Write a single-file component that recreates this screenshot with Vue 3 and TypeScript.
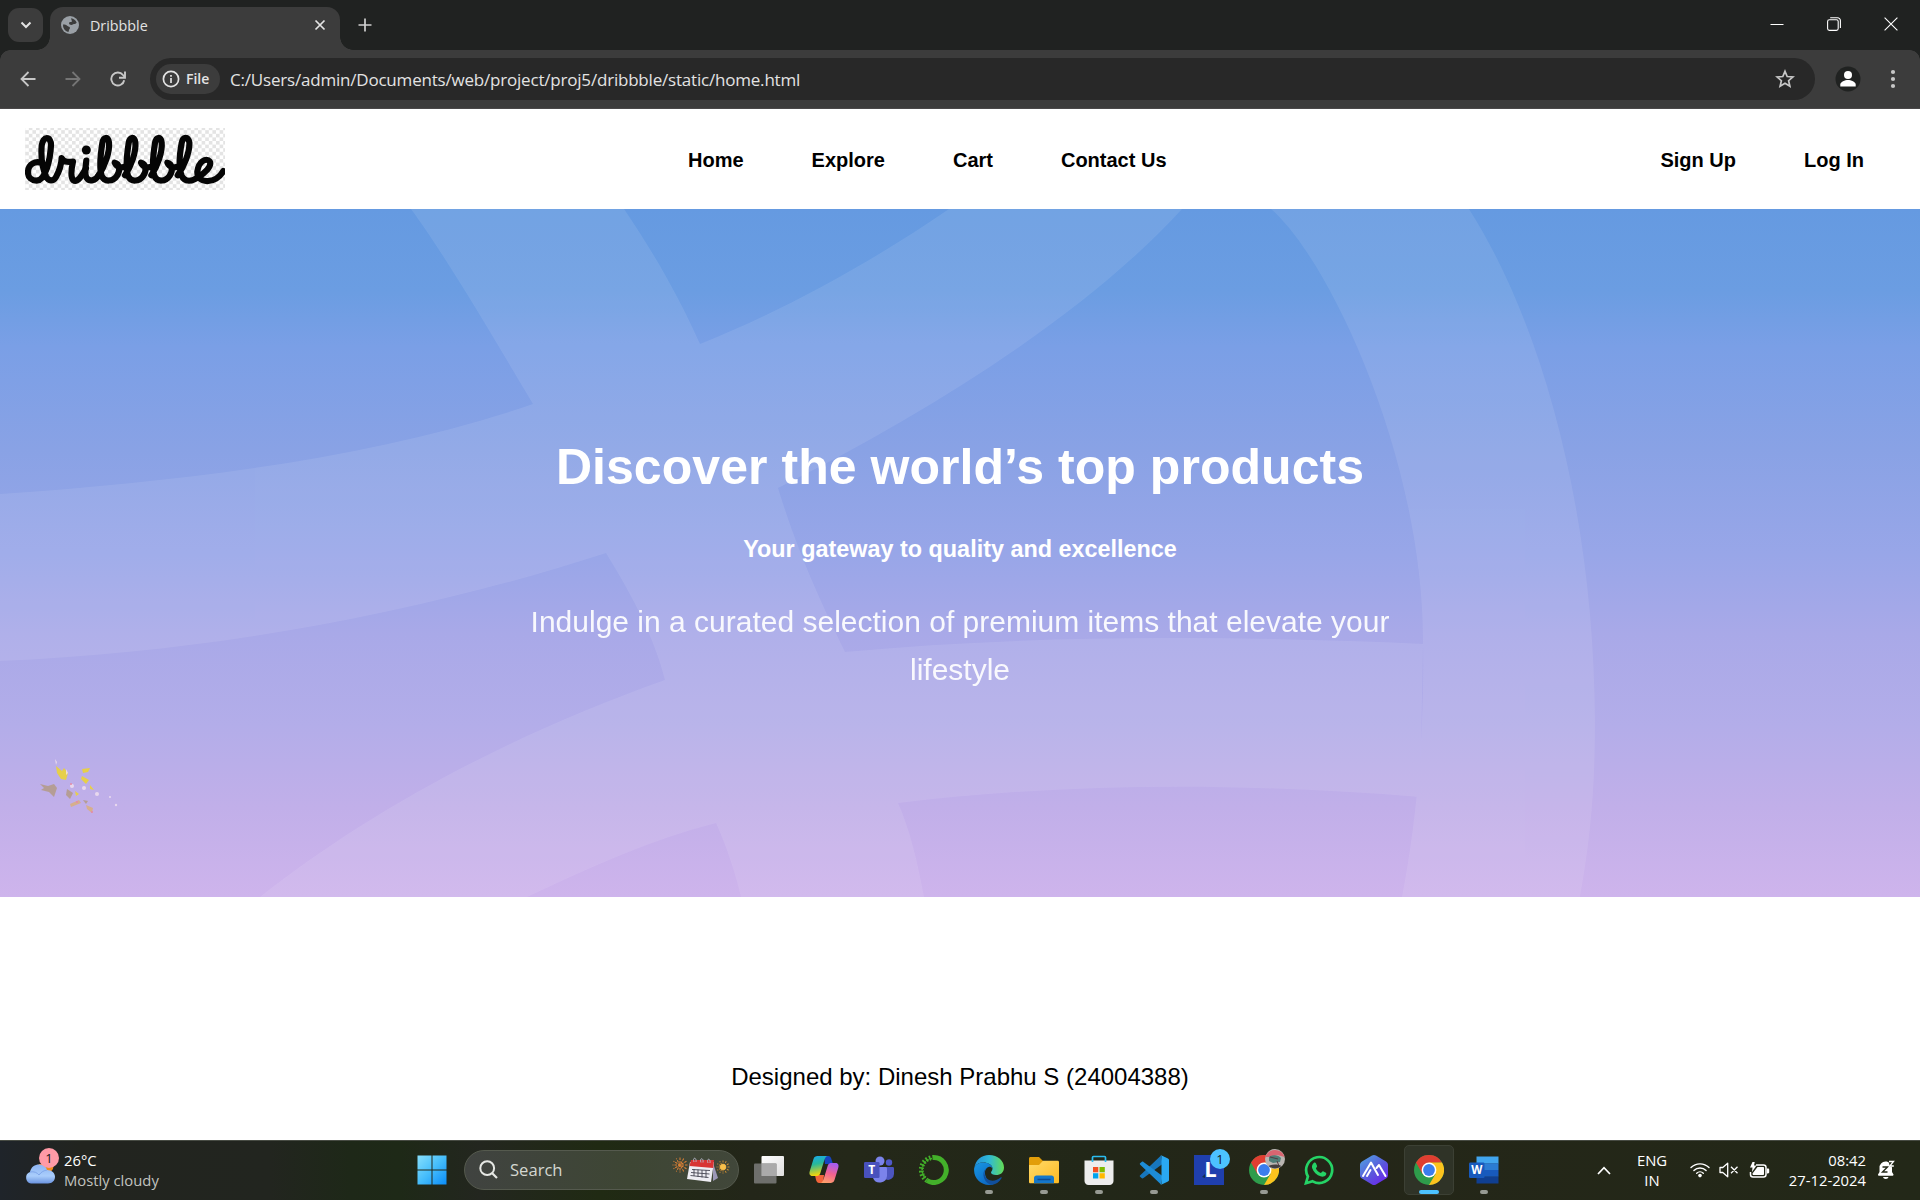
<script setup lang="ts">
interface NavLink {
  label: string
}

const mainLinks: NavLink[] = [
  { label: 'Home' },
  { label: 'Explore' },
  { label: 'Cart' },
  { label: 'Contact Us' },
]
const authLinks: NavLink[] = [{ label: 'Sign Up' }, { label: 'Log In' }]

// Horizontal offsets of the three repeated looped strokes in the logo
const loopOffsets: number[] = [0, 79, 158]

const spokes: number[] = [0, 30, 60, 90, 120, 150]
</script>

<template>
  <div class="screen">
    <div class="tabstrip">
      <div class="tab-search">
        <svg width="12" height="8" viewBox="0 0 12 8"><path d="M1.5 1.5 6 6l4.500-4.500" fill="none" stroke="#e3e3e3" stroke-width="2" /></svg>
      </div>
      <div class="tab">
        <svg class="globe" width="18" height="18" viewBox="0 0 18 18">
          <circle cx="9" cy="9" r="9" fill="#9aa0a6" />
          <path d="M10 2.200a7 7 0 0 1 5.700 4.600c-1 .9-1.300 1.200-2.700 1.200-1.200 0-1.300 1-2.500 1-1.600 0-2.500-1-2.500-2 0-.9 1-1 2-1 1 0 1-1 .6-1.800zM2 8.500c2 0 3.200.3 4.500 1.500.9.900 2.500.4 2.500 2 0 1-.8 1.200-1 2-.2.900-.3 1.700-.8 2A7 7 0 0 1 2 8.500z" fill="#3c3c3c" />
        </svg>
        <span class="tab-title">Dribbble</span>
        <svg class="tab-close" width="12" height="12" viewBox="0 0 12 12"><path d="M1.500 1.500l9 9m0-9l-9 9" stroke="#e3e3e3" stroke-width="1.700" /></svg>
      </div>
      <svg class="tab-new" width="14" height="14" viewBox="0 0 14 14"><path d="M7 .5v13M.5 7h13" stroke="#d0d0d0" stroke-width="1.700" /></svg>
      <div class="window-controls">
        <svg width="14" height="14" viewBox="0 0 14 14"><path d="M.5 7.500h13" stroke="#fff" /></svg>
        <svg width="14" height="14" viewBox="0 0 14 14"><g fill="none" stroke="#fff" stroke-width="1.100"><rect x=".6" y="2.800" width="10.600" height="10.600" rx="1.800" /><path d="M3.200 .7h7.300a2.900 2.900 0 0 1 2.900 2.900v7.300" /></g></svg>
        <svg width="14" height="14" viewBox="0 0 14 14"><path d="M.6 .6l12.800 12.800m0-12.800L.6 13.400" stroke="#fff" stroke-width="1.100" /></svg>
      </div>
    </div>

    <div class="toolbar">
      <div class="nav-buttons">
        <svg width="16" height="16" viewBox="0 0 16 16"><path d="M8.500 1L1.500 8l7 7M1.500 8H15.500" fill="none" stroke="#c7c7c7" stroke-width="1.800" /></svg>
        <svg width="16" height="16" viewBox="0 0 16 16"><path d="M7.500 1l7 7-7 7M14.500 8H.5" fill="none" stroke="#757575" stroke-width="1.800" /></svg>
        <svg width="16" height="16" viewBox="0 0 16 16"><path d="M14.200 9.200A6.500 6.500 0 1 1 13 4l1.600 1.900" fill="none" stroke="#c7c7c7" stroke-width="1.900" /><path d="M15 .5v6.300H9" fill="none" stroke="#c7c7c7" stroke-width="1.900" /></svg>
      </div>
      <div class="omnibox">
        <div class="chip">
          <svg width="18" height="18" viewBox="0 0 18 18"><circle cx="9" cy="9" r="7.600" fill="none" stroke="#e3e3e3" stroke-width="1.700" /><path d="M9 8v5M9 5v1.700" stroke="#e3e3e3" stroke-width="1.700" /></svg>
          <span>File</span>
        </div>
        <span class="url">C:/Users/admin/Documents/web/project/proj5/dribbble/static/home.html</span>
        <svg class="star" width="20" height="20" viewBox="0 0 20 20"><path d="M10 2.300l2.200 5.200 5.700.5-4.300 3.700 1.300 5.500-4.900-2.900-4.900 2.900 1.300-5.500L2.100 8l5.700-.5z" fill="none" stroke="#c7c7c7" stroke-width="1.700" /></svg>
      </div>
      <svg class="profile" width="26" height="26" viewBox="0 0 26 26"><circle cx="13" cy="13" r="12.500" fill="#202221" /><circle cx="13" cy="9" r="4" fill="#fff" /><path d="M5.300 20.500v-2c0-2.700 4.700-4.500 7.700-4.500s7.700 1.800 7.700 4.500v2z" fill="#fff" /></svg>
      <svg class="kebab" width="6" height="20" viewBox="0 0 6 20"><g fill="#c7c7c7"><circle cx="3" cy="3" r="2.100" /><circle cx="3" cy="10" r="2.100" /><circle cx="3" cy="17" r="2.100" /></g></svg>
    </div>

    <header class="site-header">
      <svg class="logo" width="200" height="62" viewBox="75 69 600 186" preserveAspectRatio="none">
        <defs>
          <pattern id="checks" width="21.600" height="21.600" patternUnits="userSpaceOnUse">
            <rect width="21.600" height="21.600" fill="#fff" />
            <path d="M0 0h10.800v10.800H0zM10.800 10.800h10.800v10.800H10.800z" fill="#e4e4e4" />
          </pattern>
        </defs>
        <rect x="75" y="69" width="600" height="186" fill="url(#checks)" />
        <g fill="none" stroke="#050505" stroke-width="18.500" stroke-linecap="round" stroke-linejoin="round">
          <path d="M129 177C108 163 84 178 84 202C84 218 96 227 110 227C138 225 151 160 153 122C154 92 128 92 125 122C122 164 128 192 138 214C146 230 160 230 168 216C178 198 184 180 185 159C194 174 206 170 219 170C214 192 211 214 219 225C232 235 246 212 258 190" />
          <path d="M259 167C256 190 253 206 259 217C268 232 286 228 298 208" />
          <path v-for="dx in loopOffsets" :key="dx" :transform="`translate(${dx} 0)`" d="M296 211C314 185 330 140 327 112C324 92 310 96 307 114C301 152 298 192 305 212C314 233 339 230 351 212C362 196 359 177 344 173C350 188 366 190 378 184" />
          <path d="M533 211C552 185 570 140 568 112C565 92 548 96 545 114C538 152 537 192 545 212C554 232 577 231 594 216C615 204 637 183 629 169C619 156 595 170 592 200C590 238 648 238 670 198" />
        </g>
        <circle cx="259" cy="135" r="13.500" fill="#050505" />
      </svg>
      <nav class="links main-links">
        <a v-for="link in mainLinks" :key="link.label">{{ link.label }}</a>
      </nav>
      <nav class="links">
        <a v-for="link in authLinks" :key="link.label">{{ link.label }}</a>
      </nav>
    </header>

    <section class="hero">
      <svg class="hero-art" width="1920" height="688" viewBox="0 209 1920 688">
        <g fill="#fff" opacity=".085">
          <path d="M1271 209C1330 260 1423 460 1423 640C1425 740 1415 830 1402 897H1580C1592 830 1595 780 1595 721C1594 520 1546 330 1469 209z" />
          <path d="M411 209C445 255 492 335 533 404L606 553C635 600 655 640 665 680L716 823C728 850 736 875 741 897H924C917 860 910 830 898 803L845 652C825 610 800 560 778 488L700 344C678 295 655 255 624 209z" />
          <path d="M0 494C190 481 380 457 533 404L700 344C785 310 872 262 949 209H1182C1090 310 935 410 778 488L606 553C430 610 220 652 0 661z" />
          <path d="M665 680C510 735 370 810 260 897H527C590 867 650 840 716 823L898 803C1070 782 1250 783 1420 797L1423 644C1240 636 1040 634 845 652z" />
        </g>
        <g class="petals">
          <g fill="#e6cf4a"><path d="M56 766l6 5 2-3 4 5-2 7-5-1-4-6z" /><path d="M82 769l8-1-2 4-5 1zM82 776l7 4-3 4-5-5zM90 785l4 5-4-1zM75 791l4 3-3 2z" /></g>
          <g fill="#b39a86" opacity=".85"><path d="M40 784l8 2 6-2 3 4-3 9-5-5-8-2 3-2zM67 789l6 4-3 6-4-4zM83 800l5 1-2 3z" /></g>
          <g fill="#d6af8d"><path d="M70 804l9-4 2 3-10 4zM86 805l7 3-1 5-5-4z" /></g>
          <g fill="#f3e3ef" opacity=".8"><circle cx="84" cy="788" r="2" /><circle cx="97" cy="794" r="2" /><circle cx="110" cy="797" r="1" /><circle cx="116" cy="805" r="1.200" /><circle cx="72" cy="786" r="2" /><path d="M55 759l2 3-1 3zM66 769l2 4-2 2z" /></g>
          <g fill="#e68aa5"><circle cx="71" cy="784" r="1" /><circle cx="77" cy="802" r="1" /><circle cx="92" cy="812" r="1" /></g>
        </g>
      </svg>
      <div class="hero-copy">
        <h1>Discover the world’s top products</h1>
        <h2>Your gateway to quality and excellence</h2>
        <p>Indulge in a curated selection of premium items that elevate your lifestyle</p>
      </div>
    </section>

    <footer class="site-footer">Designed by: Dinesh Prabhu S (24004388)</footer>

    <div class="taskbar">
      <div class="weather">
        <div class="weather-icon">
          <svg width="30" height="20" viewBox="0 0 30 20">
            <defs><linearGradient id="cloud" x2="0" y2="1"><stop stop-color="#8db5f4" /><stop offset=".6" stop-color="#a9cdfb" /><stop offset="1" stop-color="#6a93e0" /></linearGradient></defs>
            <circle cx="21" cy="2" r="7.500" fill="#f28a1c" />
            <path d="M6 19.500A6 6 0 0 1 5 8C6 3 10 .6 14 .6c4 0 7 2 8 5.400 5 0 8 3 8 6.800 0 4-3 6.700-7 6.700z" fill="url(#cloud)" />
            <path d="M5 8c4-.8 7 .5 9 3 2-3 5-4.600 8-5" fill="none" stroke="#7fa6ea" />
          </svg>
          <span class="badge pink">1</span>
        </div>
        <div class="weather-text"><span>26°C</span><span class="dim">Mostly cloudy</span></div>
      </div>

      <svg class="start" width="30" height="30" viewBox="0 0 30 30">
        <defs><linearGradient id="win" x2="1" y2="1"><stop stop-color="#87dffb" /><stop offset=".5" stop-color="#45bdfb" /><stop offset="1" stop-color="#0a8cf8" /></linearGradient></defs>
        <path d="M.5 .5h14v14H.5zM15.500 .5h14v14h-14zM.5 15.500h14v14H.5zM15.500 15.500h14v14h-14z" fill="url(#win)" />
      </svg>

      <div class="search">
        <svg width="20" height="20" viewBox="0 0 20 20"><circle cx="8.200" cy="8.200" r="6.900" fill="none" stroke="#e6e8e4" stroke-width="2" /><path d="M13 13l5 5" stroke="#e6e8e4" stroke-width="2.200" /></svg>
        <span>Search</span>
        <svg class="search-art" width="58" height="26" viewBox="0 0 58 26">
          <g stroke="#dc8136" stroke-width="1" stroke-dasharray="2.500 1"><path v-for="a in spokes" :key="a" :transform="`rotate(${a} 8 8)`" d="M8 .5v15" /></g>
          <g stroke="#c98a32" stroke-width="1" stroke-dasharray="2 1"><path v-for="a in spokes" :key="a" :transform="`rotate(${a} 51 10)`" d="M51 3.500v13" /></g>
          <circle cx="51" cy="10" r="3" fill="#f8c04b" />
          <path d="M41 6l5 15-5 3z" fill="#9c98b6" />
          <path d="M18 5h24l-3 20-24-3z" fill="#eeedf3" />
          <path d="M19 3h23l-.8 8L17.500 9z" fill="#d83434" />
          <g stroke="#454552" stroke-width=".9" fill="none"><path d="M20 12.500l18 1M19 15.500l18.500 1.500M18.500 18.500l18 2M22 12v7M26 12.500v7.500M30 13v7.500M34 13v8" /><path d="M22 5c-2-5 3-5 2 0M29 5.500c-2-5 3-5 2 0M36 6c-2-5 3-5 2 0" stroke="#b9b9c8" /></g>
        </svg>
      </div>

      <div class="apps">
        <div class="app">
          <svg width="30" height="30" viewBox="0 0 30 30"><defs><linearGradient id="tv" x2="1" y2="1"><stop stop-color="#fff" /><stop offset="1" stop-color="#dedede" /></linearGradient></defs><rect x="7.500" y="1" width="22.500" height="20" rx="1" fill="url(#tv)" /><rect x="0" y="8.500" width="22.500" height="20" rx="1" fill="#777875" opacity=".9" /><rect x="7.500" y="8.500" width="15" height="12.500" fill="#aaa" /></svg>
        </div>
        <div class="app">
          <svg width="30" height="30" viewBox="0 0 30 30">
            <defs>
              <linearGradient id="cpA" x2=".2" y2="1"><stop stop-color="#19a9f0" /><stop offset=".45" stop-color="#27b89b" /><stop offset="1" stop-color="#f4d40b" /></linearGradient>
              <linearGradient id="cpB" x1=".6" x2=".3" y2="1"><stop stop-color="#a65cf0" /><stop offset=".5" stop-color="#f3628f" /><stop offset="1" stop-color="#ffa06a" /></linearGradient>
            </defs>
            <path d="M15 1h3.500c3 0 3.500 1.500 4.200 4L24 9h-8z" fill="#1644bf" />
            <path d="M14 28h-3c-3 0-3.500-1.500-4.200-4L6 20h9z" fill="#f2643a" />
            <path d="M8.500 1H19c-2 0-3 2-3.800 4.500l-4 13C10.500 20.500 9 21 7 21H3.500C.5 21 0 18.500.8 16L4.500 4C5.300 1.800 6.500 1 8.500 1z" fill="url(#cpA)" />
            <path d="M21.500 28H11c2 0 3-2 3.800-4.500l4-13C19.500 8.500 21 8 23 8h3.500c3 0 3.500 2.500 2.700 5l-3.700 12c-.8 2.200-2 3-4 3z" fill="url(#cpB)" />
          </svg>
        </div>
        <div class="app">
          <svg width="30" height="30" viewBox="0 0 30 30"><circle cx="25" cy="7.500" r="3.200" fill="#5059c9" /><path d="M20 12h8.500c1 0 1.500.5 1.500 1.500V19a6 6 0 0 1-8 5.500z" fill="#4c55bf" /><circle cx="16" cy="6" r="4.500" fill="#7b83eb" /><path d="M11 12h10.500c1 0 1.500.6 1.500 1.500V21a7.300 7.300 0 0 1-14 2z" fill="#7b83eb" /><rect x="0" y="7" width="15.500" height="16" rx="1.300" fill="#4951bd" /><text x="7.700" y="19" text-anchor="middle" class="glyph" font-size="12">T</text></svg>
        </div>
        <div class="app">
          <svg width="30" height="30" viewBox="0 0 30 30"><path d="M15 2.500A12.500 12.500 0 1 1 8 25.500" fill="none" stroke="#43b02a" stroke-width="5" /><path d="M15 2.500A12.500 12.500 0 0 0 8 25.500" fill="none" stroke="#43b02a" stroke-width="5" stroke-dasharray="1.600 1.800" /><path d="M13 3.500A11.500 11.500 0 0 0 6.500 23" fill="none" stroke="#43b02a" stroke-width="1.600" stroke-dasharray="2.500 1" /></svg>
        </div>
        <div class="app">
          <svg width="30" height="30" viewBox="0 0 30 30">
            <defs>
              <linearGradient id="edA" x2="1"><stop stop-color="#238fda" /><stop offset=".5" stop-color="#2fb9d7" /><stop offset="1" stop-color="#64dc54" /></linearGradient>
              <linearGradient id="edB" x2=".7" y2="1"><stop stop-color="#1897e4" /><stop offset="1" stop-color="#0c67c2" /></linearGradient>
            </defs>
            <path d="M.3 13C1.500 5 7.500 0 15 0c9 0 15 6 15 12.500 0 5-3.500 7.500-8 7.500-3 0-5-1-5-2.500 0-1 1.500-1.500 1.500-4C18.500 10 14 7.500 9.500 7.500 5 7.500 1.500 9.500.3 13z" fill="url(#edA)" />
            <path d="M.2 13C1.500 9.500 5 7.500 9.500 7.500c5 0 9 3 9 6-1-1.500-2.500-2-4-1.500-3 1-4.500 5-3 9 1.500 4.500 5 7.500 9.500 7.500-2 1-4 1.500-6 1.500C6.500 30-1 23 .2 13z" fill="url(#edB)" />
            <path d="M12.500 13c-3 3-2.500 8.500 1 11 4 3 9.500 1.500 13-1.500 1-.8 1.500 0 1 .8C25.500 27 22 29.400 18.500 29.700 11 30 6 18 12.500 13z" fill="#114f9c" />
          </svg><i class="dot" />
        </div>
        <div class="app">
          <svg width="30" height="30" viewBox="0 0 30 30"><defs><linearGradient id="fold" x2="1" y2="1"><stop stop-color="#ffda6a" /><stop offset="1" stop-color="#fdba22" /></linearGradient></defs><path d="M0 3.500C0 2.500.7 2 1.500 2H10l4 4v5H0z" fill="#e29e0a" /><path d="M0 10h10l4-4.200h14.500c1 0 1.500.5 1.500 1.500V27c0 .8-.6 1.300-1.300 1.300H1.300C.6 28.300 0 27.800 0 27z" fill="url(#fold)" /><path d="M5 28.300V23c0-1.500 1-2.500 2.500-2.500h15c1.500 0 2.500 1 2.500 2.500v5.300z" fill="#1577c9" /><path d="M8.500 24.500h13" stroke="#0d4b93" stroke-width="1.500" /></svg><i class="dot" />
        </div>
        <div class="app">
          <svg width="30" height="30" viewBox="0 0 30 30"><path d="M.5 5.500h29V26c0 2.300-1.700 4-4 4h-21c-2.300 0-4-1.700-4-4z" fill="#ededed" /><path d="M8.500 7V2.500c0-.6.4-1 1-1h11c.6 0 1 .4 1 1V7" fill="none" stroke="#2bbdf0" stroke-width="1.700" /><path d="M9 12h5.300v5.300H9z" fill="#f25022" /><path d="M15.500 12h5.300v5.300h-5.300z" fill="#7fba00" /><path d="M9 18.200h5.300v5.300H9z" fill="#00a4ef" /><path d="M15.500 18.200h5.300v5.300h-5.300z" fill="#ffb900" /></svg><i class="dot" />
        </div>
        <div class="app">
          <svg width="30" height="30" viewBox="0 0 30 30"><path d="M1.500 20L22 .5l1.500 8.500L4.500 23c-.8.600-1.500.5-2.200-.2l-1.200-1.100c-.7-.6-.3-1.100.4-1.700z" fill="#1776bc" /><path d="M1.500 10L22 29.500l1.500-8.500L4.500 7c-.8-.6-1.500-.5-2.200.2L1.100 8.300c-.7.600-.3 1.100.4 1.700z" fill="#1d8cd6" /><path d="M21.500 0l7 3.200c1 .5 1.500 1 1.500 2v19.600c0 1-.5 1.500-1.500 2l-7 3.200c.7-.5 1-1 1-2V2c0-1-.3-1.500-1-2z" fill="#2aa8f2" /></svg><i class="dot" />
        </div>
        <div class="app">
          <svg class="spill" width="30" height="30" viewBox="0 0 30 30"><rect width="30" height="30" fill="#1f3fae" /><path d="M8 22l3-3v4z" fill="#13304d" /><text x="16.500" y="22" text-anchor="middle" class="glyph" font-size="22">L</text></svg>
          <span class="badge blue">1</span>
        </div>
        <div class="app">
          <svg width="30" height="30" viewBox="0 0 30 30"><circle cx="15" cy="15" r="15" fill="#2e9c4b" /><path d="M2 7.500A15 15 0 0 1 28 7.500L15 8 8.500 19z" fill="#e03e31" /><path d="M28 7.500A15 15 0 0 1 15 30l6.500-11L15 7.500z" fill="#fcc31e" /><circle cx="15" cy="15" r="7.400" fill="#fff" /><circle cx="15" cy="15" r="5.900" fill="#3b7ded" /></svg>
          <svg class="avatar" width="20" height="20" viewBox="0 0 20 20"><circle cx="10" cy="10" r="10" fill="#b9b5b1" /><path d="M.5 8a10 10 0 0 1 19 0l-7-2-7 2z" fill="#d96571" /><path d="M4 8c4-3 10-2 12 1l-1 4-7 1-4-2z" fill="#507f78" /><path d="M5 8l8 2M12 12l2 5" stroke="#533b42" /><path d="M3.500 17c4-2 9-2 13 0a10 10 0 0 1-13 0z" fill="#443f40" /></svg><i class="dot" />
        </div>
        <div class="app">
          <svg width="30" height="30" viewBox="0 0 30 30"><path d="M2 28.200l1.900-6.700A13 13 0 1 1 8.700 26.300z" fill="none" stroke="#25d366" stroke-width="2.700" /><path d="M9.700 8c.6-.6 1.800-.6 2.200.2l1.200 2.800c.3.700-.9 1.800-1.200 2.400 1 2 2.700 3.700 5 4.600.7-.4 1.500-2 2.200-1.700l2.800 1.400c.6.300.4 1.500 0 2.300-.8 1.300-3 2-4.700 1.500C12.500 20.200 9.400 17 8.100 13c-.5-1.800.3-3.900 1.600-5z" fill="#25d366" /></svg>
        </div>
        <div class="app">
          <svg width="30" height="30" viewBox="0 0 30 30"><defs><linearGradient id="hex" x2=".8" y2="1"><stop stop-color="#4ea8e2" /><stop offset=".6" stop-color="#5b55dc" /><stop offset="1" stop-color="#6c25ed" /></linearGradient></defs><path d="M13 .6c1.300-.8 2.700-.8 4 0l10 5.800c1.200.7 2 2 2 3.400v10.400c0 1.400-.8 2.700-2 3.400l-10 5.800c-1.300.8-2.700.8-4 0L3 23.600c-1.200-.7-2-2-2-3.400V9.800c0-1.400.8-2.700 2-3.400z" fill="url(#hex)" /><path d="M4 21l8-13.500L19 20M8 21l3.500-6M17.500 13l2.500-3 6.500 11" fill="none" stroke="#fff" stroke-width="2" stroke-linejoin="round" stroke-linecap="round" /></svg>
        </div>
        <div class="app active">
          <svg width="30" height="30" viewBox="0 0 30 30"><circle cx="15" cy="15" r="15" fill="#2e9c4b" /><path d="M2 7.500A15 15 0 0 1 28 7.500L15 8 8.500 19z" fill="#e03e31" /><path d="M28 7.500A15 15 0 0 1 15 30l6.500-11L15 7.500z" fill="#fcc31e" /><circle cx="15" cy="15" r="7.400" fill="#fff" /><circle cx="15" cy="15" r="5.900" fill="#3b7ded" /></svg><i class="dot" />
        </div>
        <div class="app">
          <svg width="30" height="30" viewBox="0 0 30 30"><path d="M7.500 1.500h22v7h-22z" fill="#41a5ee" /><path d="M7.500 8.200h22V15h-22z" fill="#2b7cd3" /><path d="M7.500 15h22v6.800h-22z" fill="#185abd" /><path d="M7.500 21.800h22v6.700h-22z" fill="#103f91" /><rect x="0" y="7.500" width="15.500" height="15.500" rx="1.200" fill="#185abd" /><text x="7.700" y="19.200" text-anchor="middle" class="glyph" font-size="11.500">W</text></svg><i class="dot" />
        </div>
      </div>

      <div class="tray">
        <svg class="chev" width="14" height="9" viewBox="0 0 14 9"><path d="M1 8l6-6.300L13 8" fill="none" stroke="#fff" stroke-width="1.700" /></svg>
        <div class="lang"><span>ENG</span><span>IN</span></div>
        <svg class="wifi" width="20" height="16" viewBox="0 0 20 16"><g fill="none" stroke="#fff" stroke-width="1.400" stroke-linecap="round"><path d="M1 5.600a12.700 12.700 0 0 1 18 0M3.900 8.500a8.600 8.600 0 0 1 12.200 0M6.700 11.200a4.700 4.700 0 0 1 6.600 0" /></g><circle cx="10" cy="13.600" r="1.800" fill="#fff" /></svg>
        <svg class="speaker" width="20" height="16" viewBox="0 0 20 16"><path d="M1 5.500h2.800L8.700 1.200v13.600L3.800 10.500H1zM12 4.700l6.500 6.600m0-6.600L12 11.300" fill="none" stroke="#fff" stroke-width="1.300" stroke-linejoin="round" /></svg>
        <svg class="battery" width="21" height="18" viewBox="0 0 21 18"><path d="M7 4h7.500C16 4 17 5 17 6.500v7c0 1.500-1 2.500-2.500 2.500H4c-1.500 0-2.500-1-2.500-2.500V11" fill="none" stroke="#fff" stroke-width="1.500" /><path d="M8.500 6H14c.6 0 1 .4 1 1v6c0 .6-.4 1-1 1H4.500C4 14 3.500 13.500 3.500 12.500zM18 7.500h1c.7 0 1.200.5 1.200 1.200v2.600c0 .7-.5 1.200-1.200 1.200h-1zM3.500 1h2.200L5 4.500h2.500L3 11l.5-4.500H1z" fill="#fff" /></svg>
        <div class="clock"><span>08:42</span><span>27-12-2024</span></div>
        <svg class="bell" width="18" height="20" viewBox="0 0 18 20"><path d="M1 14.500l1.500-2.500V8a6 6 0 0 1 6-6.500c3.500 0 6.500 2.600 6.500 6.500v4l1.500 2.500c0 .8-.5 1.300-1.300 1.300H2.200C1.400 15.800 1 15.300 1 14.500zM6 17h5.500c-.3 1.200-1.300 2-2.700 2S6.300 18.200 6 17z" fill="#fff" /><path d="M5.500 7h5l-5 5h5" fill="none" stroke="#232818" stroke-width="1.400" /><path d="M11 0h7v6.500h-5z" fill="#232818" /><path d="M12 1.500h4.500L12.800 6h4" fill="none" stroke="#fff" stroke-width="1.300" /></svg>
      </div>
    </div>
  </div>
</template>

<style>
body {
  margin: 0;
  overflow: hidden;
}
</style>

<style scoped>
.screen {
  width: 1920px;
  height: 1200px;
  display: flex;
  flex-direction: column;
  background: #fff;
  font-family: "Liberation Sans", Arial, sans-serif;
}
svg {
  display: block;
  flex: none;
}

/* Browser frame */
.tabstrip {
  height: 50px;
  flex: none;
  display: flex;
  background: #202221;
  font-family: "Open Sans", "Noto Sans", sans-serif;
}
.tab-search {
  width: 35px;
  height: 34px;
  margin: 8px 7px 0 8px;
  border-radius: 11px;
  background: #3c3c3c;
  display: flex;
  align-items: center;
  justify-content: center;
}
.tab {
  position: relative;
  width: 290px;
  height: 43px;
  margin-top: 7px;
  box-sizing: border-box;
  padding: 0 14px 7px 11px;
  border-radius: 13px 13px 0 0;
  background: #3c3c3c;
  display: flex;
  align-items: center;
}
.tab::before,
.tab::after {
  content: "";
  position: absolute;
  bottom: 0;
  width: 13px;
  height: 13px;
}
.tab::before {
  left: -13px;
  background: radial-gradient(circle at 0 0, transparent 12.500px, #3c3c3c 13px);
}
.tab::after {
  right: -13px;
  background: radial-gradient(circle at 100% 0, transparent 12.500px, #3c3c3c 13px);
}
.tab-title {
  margin-left: 11px;
  padding-top: 2px;
  flex: 1;
  font-size: 14.300px;
  line-height: 20px;
  color: #e3e3e3;
}
.tab-new {
  margin: 18px 0 0 18px;
}
.window-controls {
  margin-left: auto;
  padding: 17px 22px 0 0;
  display: flex;
  gap: 43px;
}
.toolbar {
  height: 59px;
  flex: none;
  box-sizing: border-box;
  padding: 8px 22px 9px 20px;
  border-bottom: 1px solid #4a4849;
  display: flex;
  align-items: center;
  background:
    radial-gradient(circle at 10px 10px, #3c3c3c 9.500px, #202221 10px) 0 0 / 10px 10px no-repeat,
    radial-gradient(circle at 0 10px, #3c3c3c 9.500px, #202221 10px) 100% 0 / 10px 10px no-repeat,
    #3c3c3c;
  font-family: "Open Sans", "Noto Sans", sans-serif;
}
.nav-buttons {
  display: flex;
  gap: 29px;
  width: 130px;
}
.omnibox {
  width: 1665px;
  height: 42px;
  box-sizing: border-box;
  padding: 0 20px 0 6px;
  border-radius: 21px;
  background: #282828;
  display: flex;
  align-items: center;
}
.chip {
  width: 64px;
  height: 30px;
  box-sizing: border-box;
  padding-left: 6px;
  border-radius: 15px;
  background: #3c3c3c;
  display: flex;
  align-items: center;
  gap: 6px;
  font-size: 14px;
  font-weight: 600;
  color: #e3e3e3;
}
.url {
  margin-left: 10px;
  padding-top: 2px;
  flex: 1;
  font-size: 17px;
  letter-spacing: -0.2px;
  color: #e3e3e3;
  white-space: nowrap;
}
.profile {
  margin-left: 20px;
}
.kebab {
  margin-left: auto;
  margin-right: 2px;
}

/* Page header */
.site-header {
  height: 100px;
  flex: none;
  box-sizing: border-box;
  padding: 0 56px 0 25px;
  display: flex;
  align-items: center;
  background: #fff;
}
.links {
  display: flex;
  gap: 68px;
  padding-top: 2px;
  font-size: 20px;
  font-weight: 700;
  line-height: 24px;
  color: #000;
  white-space: nowrap;
}
.main-links {
  margin: 0 auto 0 463px;
}

/* Hero */
.hero {
  position: relative;
  height: 688px;
  flex: none;
  display: flex;
  justify-content: center;
  background: linear-gradient(#659ae1 0%, #6b9de2 12%, #7a9fe6 20%, #89a2e5 35%, #98a6e8 50%, #a9a9e8 62%, #b3ade9 75%, #c1afe9 87%, #ceb4ec 100%);
}
.hero-art {
  position: absolute;
  inset: 0;
}
.petals {
  filter: blur(0.5px);
}
.hero-copy {
  position: relative;
  width: 960px;
  padding-top: 230px;
  text-align: center;
  color: #fff;
}
.hero-copy h1 {
  margin: 0;
  font-size: 50px;
  line-height: 56px;
  letter-spacing: 0.05px;
}
.hero-copy h2 {
  margin: 41px 0 0;
  font-size: 23.400px;
  line-height: 26px;
}
.hero-copy p {
  width: 900px;
  margin: 36px auto 0;
  font-size: 30px;
  line-height: 48px;
  opacity: 0.92;
}

.site-footer {
  flex: 1;
  padding-top: 166px;
  text-align: center;
  font-size: 24px;
  line-height: 28px;
  color: #000;
}

/* Desktop taskbar */
.taskbar {
  height: 60px;
  flex: none;
  box-sizing: border-box;
  border-top: 1px solid #474b43;
  padding-bottom: 1px;
  display: flex;
  align-items: center;
  color: #fff;
  background: linear-gradient(90deg, #1f242a 0, #22241f 80px, #22251f 270px, #1e2818 350px, #1e2917 400px, #23261f 480px, #202a13 600px, #232619 750px, #242819 850px, #222718 1100px, #242618 1300px, #232818 1920px);
  font-family: "Open Sans", "Noto Sans", sans-serif;
  font-size: 14.800px;
  line-height: 20px;
}
.weather {
  width: 391px;
  padding-left: 25px;
  display: flex;
  gap: 9px;
}
.weather-icon {
  position: relative;
  width: 30px;
  padding-top: 14px;
}
.weather-text {
  display: flex;
  flex-direction: column;
}
.dim {
  color: #c1c3bf;
}
.badge {
  position: absolute;
  width: 20px;
  height: 20px;
  border-radius: 50%;
  font-size: 13px;
  line-height: 20px;
  text-align: center;
  color: #171717;
}
.pink {
  left: 14px;
  top: -2px;
  background: #ff9aa6;
}
.blue {
  right: 6.500px;
  top: 8px;
  background: #4cc2ff;
}
.start {
  margin-left: 1px;
}
.search {
  width: 275px;
  height: 40px;
  margin-left: 17px;
  box-sizing: border-box;
  padding: 0 8px 0 14px;
  border: 1px solid #555a4e;
  border-radius: 20px;
  background: linear-gradient(90deg, #404340, #3e4634 60%, #41473a);
  display: flex;
  align-items: center;
  font-size: 16.600px;
  color: #d4d7d1;
}
.search span {
  margin-left: 11px;
}
.search-art {
  margin-left: auto;
}
.apps {
  display: flex;
  margin-left: 2.500px;
}
.app {
  position: relative;
  width: 55px;
  height: 58px;
  display: flex;
  align-items: center;
  justify-content: center;
}
.spill {
  overflow: visible;
}
.dot {
  position: absolute;
  left: 23.500px;
  bottom: 5px;
  width: 8px;
  height: 4px;
  border-radius: 2px;
  background: #979a93;
}
.active::before {
  content: "";
  position: absolute;
  left: 2.500px;
  top: 4px;
  width: 48px;
  height: 48px;
  border: 1px solid #3c4034;
  border-radius: 5px;
  background: #2f3327;
}
.active svg {
  position: relative;
}
.active .dot {
  left: 17.500px;
  width: 20px;
  background: #4cc2ff;
}
.avatar {
  position: absolute;
  right: 6.500px;
  top: 8px;
}
.glyph {
  fill: #fff;
  font-family: "Open Sans", sans-serif;
  font-weight: 700;
}
.tray {
  margin-left: auto;
  padding-right: 25px;
  display: flex;
  align-items: center;
}
.lang {
  width: 40px;
  margin: 0 18px 0 21px;
  display: flex;
  flex-direction: column;
  align-items: center;
}
.speaker {
  margin-left: 9px;
}
.battery {
  margin-left: 10px;
}
.clock {
  width: 88px;
  margin-left: 8px;
  display: flex;
  flex-direction: column;
  align-items: flex-end;
  white-space: nowrap;
}
.bell {
  margin-left: 11px;
}
</style>
